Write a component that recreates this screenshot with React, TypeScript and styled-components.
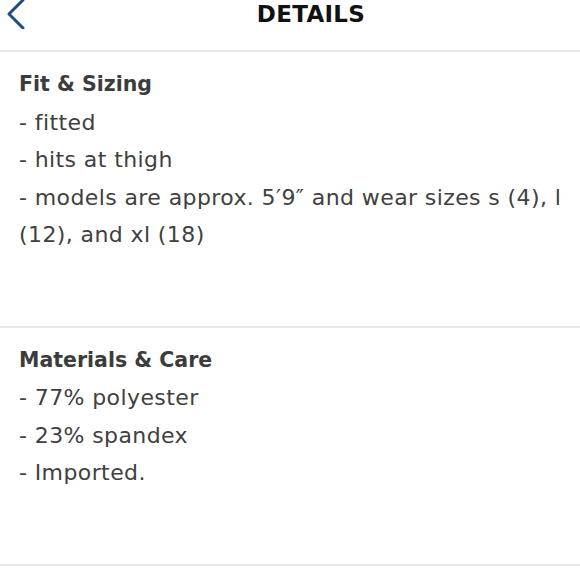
import React from 'react';
import styled, { createGlobalStyle } from 'styled-components';

const GlobalStyle = createGlobalStyle`
  html, body {
    margin: 0;
    padding: 0;
    background: #fff;
  }
  body {
    font-family: 'DejaVu Sans', 'Liberation Sans', sans-serif;
    -webkit-font-smoothing: antialiased;
  }
`;

const Page = styled.div`
  width: 580px;
  height: 580px;
  overflow: hidden;
  background: #fff;
`;

const Header = styled.header`
  display: grid;
  grid-template-columns: 42px 1fr;
  align-items: center;
  height: 28px;
  padding-bottom: 22px;
  border-bottom: 2px solid #e8e8e8;
`;

const BackButton = styled.button`
  display: flex;
  align-items: center;
  justify-content: flex-start;
  height: 28px;
  padding: 0 0 0 7px;
  border: none;
  background: none;
  cursor: pointer;
`;

const Title = styled.h1`
  margin: 0;
  text-align: center;
  font-size: 23px;
  font-weight: 700;
  letter-spacing: 0.3px;
  color: #111;
`;

const Section = styled.section`
  padding: 14px 10px 72px 19px;
  border-bottom: 2px solid #e8e8e8;
`;

const Heading = styled.h2`
  margin: 0;
  font-size: 20.5px;
  line-height: 37.5px;
  font-weight: 700;
  color: #3c3c3c;
`;

const Line = styled.p`
  margin: 0;
  font-size: 22px;
  line-height: 37.5px;
  font-weight: 400;
  letter-spacing: 0.4px;
  color: #404040;
`;

const sections = [
  {
    title: 'Fit & Sizing',
    lines: [
      '- fitted',
      '- hits at thigh',
      '- models are approx. 5\u20329\u2033 and wear sizes s (4), l (12), and xl (18)',
    ],
  },
  {
    title: 'Materials & Care',
    lines: ['- 77% polyester', '- 23% spandex', '- Imported.'],
  },
];

export default function App() {
  return (
    <Page>
      <GlobalStyle />
      <Header>
        <BackButton aria-label="Back">
          <svg width="18" height="30" viewBox="0 0 18 30" fill="none">
            <path d="M16 1 L2 15 L16 29" stroke="#1b4f80" strokeWidth="3" strokeLinecap="round" strokeLinejoin="round" />
          </svg>
        </BackButton>
        <Title>DETAILS</Title>
      </Header>
      {sections.map((s) => (
        <Section key={s.title}>
          <Heading>{s.title}</Heading>
          {s.lines.map((l) => (
            <Line key={l}>{l}</Line>
          ))}
        </Section>
      ))}
    </Page>
  );
}
